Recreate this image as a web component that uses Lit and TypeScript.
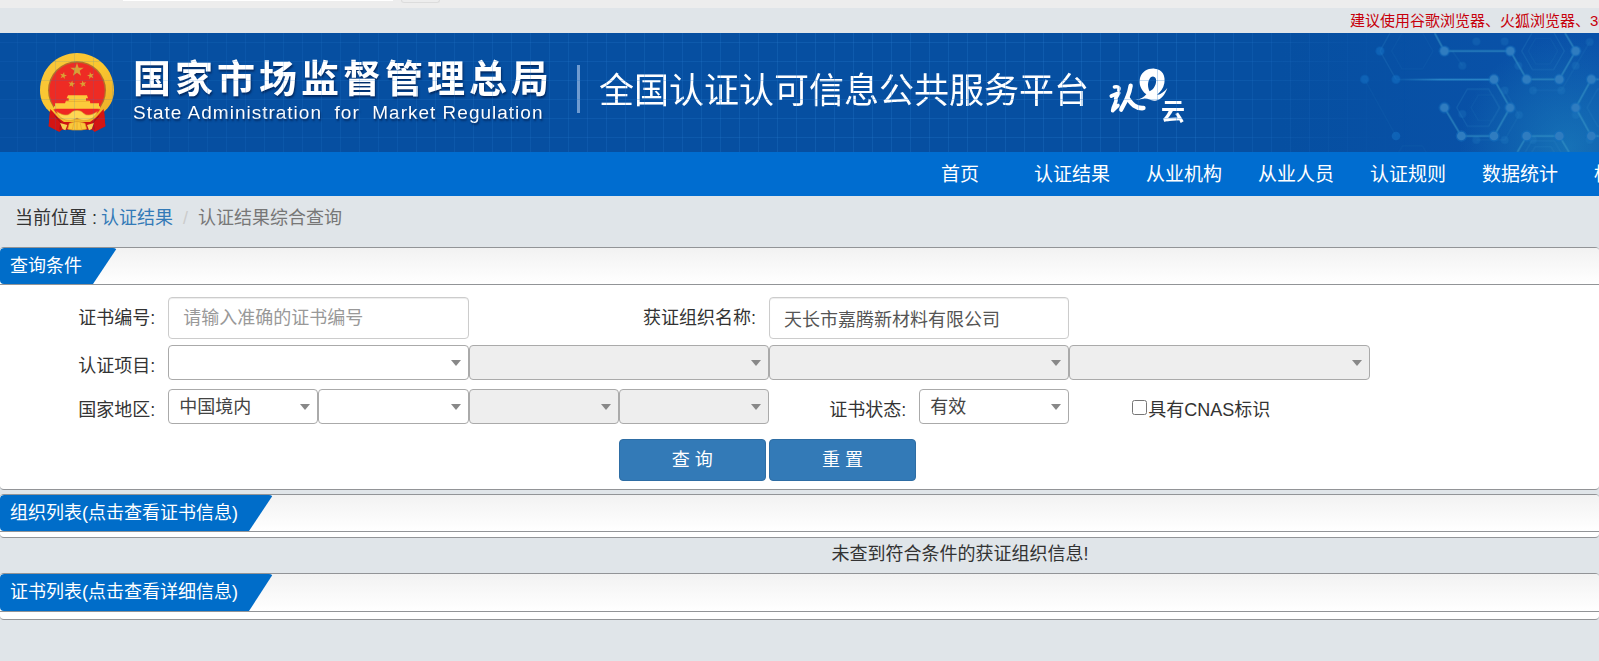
import { LitElement, html, css, svg } from "lit";
import { customElement } from "lit/decorators.js";

const NAV = ["首页", "认证结果", "从业机构", "从业人员", "认证规则", "数据统计", "标准信息"];

const star = (cx: number, cy: number, r: number, turn = 0) => {
  const pts: string[] = [];
  for (let i = 0; i < 10; i++) {
    const a = ((turn + i * 36 - 90) * Math.PI) / 180;
    const k = i % 2 ? r * 0.4 : r;
    pts.push(`${(cx + Math.cos(a) * k).toFixed(1)},${(cy + Math.sin(a) * k).toFixed(1)}`);
  }
  return svg`<polygon points=${pts.join(" ")} fill="#d9a035"/>`;
};

@customElement("state-emblem")
class StateEmblem extends LitElement {
  static styles = css`
    :host { display: block; flex: none; width: 74px; height: 79px; }
    svg { display: block; width: 100%; height: 100%; }
  `;
  render() {
    return html`<svg viewBox="0 0 222 237" aria-hidden="true">
      <defs>
        <linearGradient id="gold" x1="0" y1="0" x2="1" y2="1">
          <stop offset="0" stop-color="#f7c63c"/><stop offset=".5" stop-color="#fbc72f"/><stop offset="1" stop-color="#e9a928"/>
        </linearGradient>
      </defs>
      <path d="M30 168L26 220L58 236L66 230H156L164 236L196 220L192 168Z" fill="#cf1312"/>
      <path d="M111 0C172 0 222 49 222 112C222 143 208 163 190 178L150 207H72L31 178C13 163 0 143 0 112C0 49 50 0 111 0Z" fill="url(#gold)"/>
      <path d="M31 168L66 206L58 236L26 220ZM191 168L156 206L164 236L196 220Z" fill="#d31513"/>
      <path d="M44 188L62 208L60 230M178 188L160 208L162 230" fill="none" stroke="#9c1014" stroke-width="3"/>
      <ellipse cx="111" cy="112" rx="87" ry="87" fill="#b5702a"/>
      <ellipse cx="111" cy="113" rx="83" ry="84" fill="#ee2b24"/>
      ${star(111, 51, 21)} ${star(70, 68, 11, 12)} ${star(152, 68, 11, -12)}
      ${star(95, 93, 11, 10)} ${star(129, 93, 11, -10)}
      <path d="M84 127H141L144 136H138V143H149L151 151H177V160H180V167H42V160H45V151H75L78 143H86V136H80Z" fill="#fccb3b"/>
      <path d="M78 145H147" stroke="#e6a52a" stroke-width="2"/>
      <path d="M40 169H181L172 181L148 184C135 174 87 174 74 184L49 181Z" fill="#ef2722"/>
      <path d="M50 176C72 190 86 188 92 180C102 170 120 170 130 180C136 188 150 190 172 176C166 190 156 200 138 202C126 203 118 200 111 195C104 200 96 203 84 202C66 200 56 190 50 176Z" fill="#ffd653" stroke="#e0a028" stroke-width="2"/>
      <path d="M60 210L82 216L76 232L68 228ZM162 210L141 216L147 232L155 228Z" fill="#f7cf52"/>
      <path d="M83 228L88 211L111 205L135 211L140 228L124 231H98Z" fill="#fbc83a" stroke="#d99a24" stroke-width="2"/>
      <path d="M97 230L101 211M111 230V207M125 230L121 211" stroke="#e3a52c" stroke-width="2"/>
    </svg>`;
  }
}

@customElement("cloud-logo")
class CloudLogo extends LitElement {
  static styles = css`
    :host { display: block; flex: none; width: 76px; height: 56px; }
    svg { display: block; width: 100%; height: 100%; overflow: visible; }
    text { fill: #fff; font-family: "Noto Sans CJK SC", sans-serif; font-weight: 700; font-size: 72px; }
  `;
  render() {
    return html`<svg viewBox="60 50 228 168" role="img" aria-label="认e云">
      <g fill="none" stroke="#fff" stroke-linecap="round" stroke-linejoin="round">
        <path d="M76 110C86 108 93 111 89 119" stroke-width="10"/>
        <path d="M67 137L89 128L80 144C86 153 73 162 71 181L87 165" stroke-width="11"/>
        <path d="M125 106C121 133 111 151 96 178" stroke-width="13"/>
        <path d="M115 143C126 157 137 175 163 173" stroke-width="14"/>
      </g>
      <path d="M139 149C154 147 165 141 172 132C155 119 149 101 153 83C159 62 179 53 197 55C221 57 230 77 226 99C223 115 214 125 204 134C216 132 227 124 235 113C228 134 215 149 199 151C185 153 178 143 164 145C156 146 148 149 139 149ZM182 123C196 117 203 100 201 87C199 77 187 76 182 85C175 97 176 111 182 123Z" fill="#fff" fill-rule="evenodd"/>
      <text x="216" y="209">云</text>
    </svg>`;
  }
}

@customElement("hex-backdrop")
class HexBackdrop extends LitElement {
  static styles = css`
    :host { display: block; width: 400px; height: 119px; }
    svg { display: block; width: 100%; height: 100%; }
  `;
  render() {
    const faint = [[543, 153], [497, 238], [591, 238], [591, 408]];
    const dots = [[736, 153], [934, 153], [1130, 153], [885, 238], [983, 238], [1081, 238], [1177, 238],
      [736, 323], [933, 323], [1130, 323], [787, 408], [885, 408], [983, 408], [1081, 408], [1177, 408]];
    const ghosts = [[832, 124], [917, 124], [1172, 126], [1130, 197], [1002, 271], [1087, 271], [917, 271],
      [960, 345], [790, 342], [832, 420], [917, 420], [1002, 420], [1130, 345], [1172, 420], [958, 197], [790, 197]];
    const hex = (x: number, y: number, r: number) =>
      `M${x - r} ${y}L${x - r / 2} ${y - r * 0.87}H${x + r / 2}L${x + r} ${y}L${x + r / 2} ${y + r * 0.87}H${x - r / 2}Z`;
    return html`<svg viewBox="0 99 1200 357" aria-hidden="true">
      <defs>
        <radialGradient id="glow"><stop offset="0" stop-color="#2290c4" stop-opacity=".5"/><stop offset="1" stop-color="#2290c4" stop-opacity="0"/></radialGradient>
        <linearGradient id="fade" gradientUnits="userSpaceOnUse" x1="590" y1="0" x2="720" y2="0"><stop offset="0" stop-color="#3aa0d8" stop-opacity=".1"/><stop offset="1" stop-color="#3aa0d8"/></linearGradient>
      </defs>
      <circle cx="1110" cy="440" r="330" fill="url(#glow)"/>
      <g fill="none" stroke="#3187c6" stroke-width="4" opacity=".25">
        <path d=${hex(1032, 153, 64)}/><path d=${hex(1032, 153, 44)} opacity=".5"/>
        <path d=${hex(837, 323, 64)}/><path d=${hex(860, 323, 44)} opacity=".5"/>
        <path d=${hex(1228, 323, 64)}/><path d=${hex(1032, 482, 68)}/><path d=${hex(1032, 482, 48)}/>
        <path d=${hex(640, 153, 62)} opacity=".4"/><path d=${hex(640, 490, 60)} opacity=".4"/>
        <path d="M760 153L790 197M917 271L960 345L917 420H832M1002 271H1087L1130 197L1172 126" opacity=".7"/>
        <path d="M497 238L591 408" opacity=".4"/>
        <path d="M543 153L591 238M543 153L573 99"/>
      </g>
      <g fill="none" stroke="#3a97c8" stroke-width="5" opacity=".65">
        <path d="M707 99L736 153H934L983 238H1081L1130 153L1098 99"/>
        <path d="M885 238L933 323L885 408H787L736 323"/>
        <path d="M1200 238H1177L1130 323L1177 408H1200"/>
        <path d="M955 456L983 408H1081L1110 456"/>
      </g>
      <rect x="591" y="236" width="294" height="5" fill="url(#fade)" opacity=".7"/>
      <g fill="#2784c8">${ghosts.map(([x, y]) => svg`<circle cx=${x} cy=${y} r="12" opacity=".25"/>`)}</g>
      <g fill="#1673c8">${faint.map(([x, y]) => svg`<circle cx=${x} cy=${y} r="13" opacity=".5"/>`)}</g>
      <g>${dots.map(([x, y]) => svg`<circle cx=${x} cy=${y} r="17" fill="#1671c2" opacity=".5"/><circle cx=${x} cy=${y} r="13" fill="#2f7cc0"/>`)}</g>
    </svg>`;
  }
}

@customElement("app-root")
class AppRoot extends LitElement {
  static styles = css`
    :host {
      display: block; min-height: 100vh; overflow: hidden; background: #e0e5e9; color: #333;
      font: 18px/26px "Liberation Sans", "Noto Sans CJK SC", sans-serif;
    }
    * { box-sizing: border-box; }
    a { text-decoration: none; }
    .chrome { display: flex; gap: 8px; height: 8px; padding-left: 123px; background: #ededed; }
    .address { width: 270px; height: 1px; background: #fff; }
    .chip { width: 39px; height: 3px; border: 1px solid #dcdcdc; border-top: 0; border-radius: 0 0 3px 3px; }
    .notice { height: 25px; padding-left: calc(100% - 249px); overflow: hidden; color: #c7000b; font-size: 15px; line-height: 25px; white-space: nowrap; }
    .banner { display: grid; height: 119px; background: linear-gradient(90deg, #064fa1 80%, #0a52aa); }
    .banner > * { grid-area: 1 / 1; }
    .mesh {
      background:
        repeating-linear-gradient(90deg, transparent 0 17px, rgb(38 122 205 / .28) 17px 18px, transparent 18px 19px),
        repeating-linear-gradient(180deg, transparent 0 9px, rgb(38 122 205 / .28) 9px 10px, transparent 10px 19px);
      mask-image: linear-gradient(90deg, rgb(0 0 0 / .5), #000 50%, #000 75%, transparent 88%);
    }
    hex-backdrop { justify-self: end; }
    .brand { display: flex; align-items: center; padding-left: 40px; color: #fff; white-space: nowrap; }
    .agency { margin: 0 0 4px 19px; text-shadow: 1px 2px 2px rgb(0 20 60 / .6); }
    .agency-cn { font-size: 38px; line-height: 44px; font-weight: 700; letter-spacing: 4px; }
    .agency-en { font-size: 19px; line-height: 24px; letter-spacing: 1px; white-space: pre; }
    .rule { width: 3px; height: 48px; margin: 0 0 7px 24px; background: #6f9bd0; }
    .title { margin: 0 0 4px 19px; font-size: 35px; line-height: 48px; font-weight: 400; }
    cloud-logo { margin: 4px 0 0 20px; }
    .nav { display: flex; height: 44px; padding-left: calc(100% - 695px); overflow: hidden; background: #006dd0; }
    .nav a { flex: none; width: 112px; color: #fff; font-size: 19px; line-height: 45px; text-align: center; white-space: nowrap; }
    .crumbs { display: flex; height: 51px; padding: 9px 15px; }
    .crumbs a { margin-left: 4px; color: #337ab7; }
    .slash { padding: 0 10px; color: #ccc; }
    .here { color: #777; }
    .panel { border-top: 1px solid #929497; border-bottom: 1px solid #929497; border-radius: 4px; background: #fff; overflow: hidden; }
    .head { display: flex; height: 37px; border-bottom: 1px solid #929497; background: linear-gradient(#f2f2f2, #fff); }
    .head h2 {
      margin: 0; padding: 0 35px 0 10px; border-radius: 4px; background: #006dc9; color: #fff;
      font-size: 18px; line-height: 36px; font-weight: 400;
      clip-path: polygon(0 0, 100% 0, calc(100% - 24px) 100%, 0 100%);
    }
    .list { height: 44px; }
    .list.tall { height: 47px; }
    .tall .head { height: 38px; }
    form { padding: 12px 0 8px 18px; }
    .row { display: grid; grid-template-columns: repeat(10, 19fr) 10fr; margin-bottom: 9px; }
    .row.text { margin-bottom: 6px; height: 42px; line-height: 42px; }
    .row.picks { line-height: 42px; height: 35px; }
    .row.actions { margin: 15px 0 0; }
    .label { padding-right: 13px; text-align: right; white-space: nowrap; }
    .w2 { grid-column: span 2; }
    input[type="text"], select {
      display: block; width: 100%; min-width: 0; margin: 0; font: inherit; line-height: 26px; border-radius: 4px; background-color: #fff;
    }
    input[type="text"] { height: 42px; padding: 0 14px; border: 1px solid #ccc; color: #555; box-shadow: inset 0 1px 1px rgb(0 0 0 / .075); }
    input::placeholder { color: #999; opacity: 1; }
    select {
      appearance: none; height: 35px; padding: 0 24px 0 10px; border: 1px solid #aaa; color: #444; opacity: 1;
      background-image: url("data:image/svg+xml,%3Csvg xmlns='http://www.w3.org/2000/svg' width='10' height='6'%3E%3Cpath d='M0 0H10L5 6Z' fill='%23888'/%3E%3C/svg%3E");
      background-repeat: no-repeat; background-position: right 7px center;
    }
    select:disabled { background-color: #eee; }
    .check { display: flex; align-items: center; grid-column: 8 / 10; height: 42px; padding-left: 63px; white-space: nowrap; }
    .check input { width: 15px; height: 15px; margin: 0 1px 5px 0; }
    button { width: calc(100% - 3px); height: 42px; padding: 0; border: 1px solid #2e6da4; border-radius: 4px; background: #337ab7; color: #fff; font: inherit; }
    .query { grid-column: 5; }
    .reset { grid-column: 6; }
    .query, .reset { grid-row: 1; }
    .row.actions { grid-template-columns: repeat(10, 19fr) 10fr; padding: 0; }
    .org { margin-top: 4px; }
    .empty { height: 35px; margin: 0; padding-left: 52%; line-height: 33px; color: #333; }
  `;

  private pick(label: string, cls: string, value = "", disabled = false) {
    return html`<select class=${cls} aria-label=${label} ?disabled=${disabled}><option>${value}</option></select>`;
  }

  render() {
    return html`
      <div class="chrome"><span class="address"></span><span class="chip"></span></div>
      <div class="notice">建议使用谷歌浏览器、火狐浏览器、360浏览器</div>
      <header class="banner">
        <div class="mesh"></div>
        <hex-backdrop></hex-backdrop>
        <div class="brand">
          <state-emblem></state-emblem>
          <div class="agency">
            <div class="agency-cn">国家市场监督管理总局</div>
            <div class="agency-en">State Administration  for  Market Regulation</div>
          </div>
          <span class="rule"></span>
          <h1 class="title">全国认证认可信息公共服务平台</h1>
          <cloud-logo></cloud-logo>
        </div>
      </header>
      <nav class="nav">${NAV.map((n) => html`<a href="#">${n}</a>`)}</nav>
      <div class="crumbs"><span>当前位置 :</span><a href="#">认证结果</a><span class="slash">/</span><span class="here">认证结果综合查询</span></div>
      <section class="panel">
        <div class="head"><h2>查询条件</h2></div>
        <form @submit=${(e: Event) => e.preventDefault()}>
          <div class="row text">
            <label class="label" for="cert">证书编号:</label>
            <div class="w2"><input id="cert" type="text" placeholder="请输入准确的证书编号"></div>
            <label class="label w2" for="org">获证组织名称:</label>
            <div class="w2"><input id="org" type="text" value="天长市嘉腾新材料有限公司"></div>
          </div>
          <div class="row picks">
            <label class="label" for="project">认证项目:</label>
            <select id="project" class="w2"><option></option></select>
            ${this.pick("认证项目二级", "w2", "", true)}
            ${this.pick("认证项目三级", "w2", "", true)}
            ${this.pick("认证项目四级", "w2", "", true)}
          </div>
          <div class="row picks">
            <label class="label" for="country">国家地区:</label>
            <select id="country"><option>中国境内</option></select>
            ${this.pick("省", "")}
            ${this.pick("市", "", "", true)}
            ${this.pick("县", "", "", true)}
            <label class="label" for="status">证书状态:</label>
            <select id="status"><option>有效</option></select>
            <label class="check"><input type="checkbox">具有CNAS标识</label>
          </div>
          <div class="row actions">
            <button class="query" type="submit">查 询</button>
            <button class="reset" type="reset">重 置</button>
          </div>
        </form>
      </section>
      <section class="panel list org"><div class="head"><h2>组织列表(点击查看证书信息)</h2></div></section>
      <p class="empty">未查到符合条件的获证组织信息!</p>
      <section class="panel list tall"><div class="head"><h2>证书列表(点击查看详细信息)</h2></div></section>
    `;
  }
}
